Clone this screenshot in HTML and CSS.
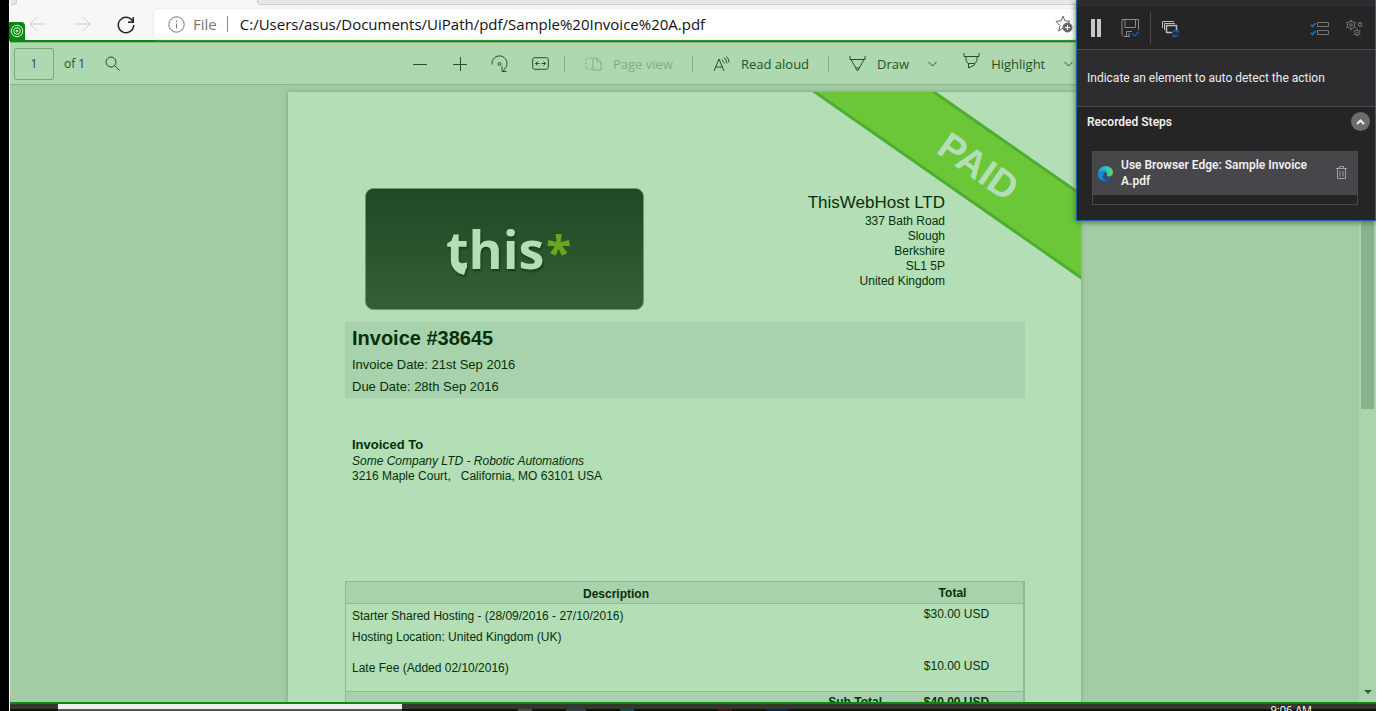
FILE: index.html
```html
<!DOCTYPE html>
<html lang="en">
<head>
<meta charset="utf-8">
<title>Sample Invoice A.pdf</title>
<link rel="stylesheet" href="styles.css">
</head>
<body>
<div class="screen">
  <header class="address-bar">
    <div class="tab-strip"></div>
    <div class="tab-edge"></div>
    <nav class="nav">
      <button class="icon-btn faint" aria-label="Back"><svg width="18" height="16" viewBox="0 0 18 16"><path d="M17 7H1M8 0 1 7l7 7"/></svg></button>
      <button class="icon-btn faint" aria-label="Forward"><svg width="18" height="16" viewBox="0 0 18 16"><path d="M1 7h16M10 0l7 7-7 7"/></svg></button>
      <button class="icon-btn strong" aria-label="Refresh"><svg width="18" height="18" viewBox="0 0 18 18"><path d="M16.200 6.300A7.700 7.700 0 1 0 16.700 9M16.300 1v5.300H11"/></svg></button>
    </nav>
    <div class="omnibox">
      <svg class="info" width="17" height="17" viewBox="0 0 17 17"><circle cx="8.500" cy="8.500" r="7.700"/><path d="M8.500 7.500v5M8.500 4.500v1.500"/></svg>
      <span class="scheme">File</span>
      <span class="scheme-line"></span>
      <input class="url" aria-label="Address" value="C:/Users/asus/Documents/UiPath/pdf/Sample%20Invoice%20A.pdf">
      <button class="icon-btn star" aria-label="Add to favorites"><svg width="18" height="18" viewBox="0 0 18 18"><path d="M8 1.200l1.900 4.600 5.100.4-3.500 3.400M8 13l-4.400 3 1.500-5.300L1 6.400l5.100-.6L8 1.200"/><circle cx="12.500" cy="12.500" r="4.500" class="solid"/><path class="light" d="M12.500 10v5M10 12.500h5"/></svg></button>
    </div>
  </header>

  <main class="capture">
    <div class="pdf-toolbar">
      <div class="pager">
        <input class="page-no" id="page-no" value="1" aria-label="Page number">
        <label for="page-no">of 1</label>
        <button class="icon-btn" aria-label="Find"><svg width="15" height="15" viewBox="0 0 15 15"><circle cx="6" cy="6" r="5"/><path d="M9.500 9.500l5 5"/></svg></button>
      </div>
      <div class="tools">
        <button class="icon-btn" aria-label="Zoom out"><svg width="14" height="14" viewBox="0 0 14 14"><path d="M0 7.500h14"/></svg></button>
        <button class="icon-btn" aria-label="Zoom in"><svg width="14" height="14" viewBox="0 0 14 14"><path d="M0 7.500h14M7.500 0v14"/></svg></button>
        <button class="icon-btn" aria-label="Rotate"><svg width="18" height="18" viewBox="0 0 18 18"><path d="M1 9.500V8.500a7.500 7.500 0 1 1 12.500 5.500l-1 2M11 11.500v5h4.500"/><circle cx="8.500" cy="9" r="1.500"/></svg></button>
        <button class="icon-btn" aria-label="Fit to width"><svg width="17" height="13" viewBox="0 0 17 13"><rect x=".7" y=".7" width="15.600" height="11.600" rx="2"/><path d="M3.500 6.500h4M9.500 6.500h4M5.500 4.500l-2 2 2 2M11.500 4.500l2 2-2 2"/></svg></button>
        <span class="divider"></span>
        <button class="tool faded" disabled><svg width="17" height="14" viewBox="0 0 17 14"><path stroke-dasharray="2 1.500" d="M7 1H1v11h6"/><path d="M8 1h4l4 4v8H8zM12 1v4h4"/></svg><span>Page view</span></button>
        <span class="divider"></span>
        <button class="tool"><svg width="17" height="16" viewBox="0 0 17 16"><path d="M1 15 6 3l5 12M2.500 11h7M9 3.500l2.500 4M11 1.500q2.500 2 3 6M13.500.5Q16 3 16 6.500"/></svg><span>Read aloud</span></button>
        <span class="divider"></span>
        <button class="tool"><svg width="17" height="16" viewBox="0 0 17 16"><path d="M1 0v3.500h15V0M2 3.500 8.500 15 15 3.500M6.500 12h4"/></svg><span>Draw</span></button>
        <button class="icon-btn chevron" aria-label="Draw options"><svg width="9" height="6" viewBox="0 0 9 6"><path d="M.5 1l4 4 4-4"/></svg></button>
        <button class="tool"><svg class="raised" width="17" height="16" viewBox="0 0 17 16"><path d="M1 0v3.500h15V0M3 3.500v4l2 3h7l2-3v-4M5.500 10.500V15l6-3v-1.500"/></svg><span>Highlight</span></button>
        <button class="icon-btn chevron" aria-label="Highlight options"><svg width="9" height="6" viewBox="0 0 9 6"><path d="M.5 1l4 4 4-4"/></svg></button>
      </div>
    </div>

    <div class="viewer">
      <div class="canvas">
        <article class="page">
          <svg class="ribbon" width="270" height="190" viewBox="0 0 270 190">
            <path class="band" d="M2-1h120l150 104v84z"/>
            <path class="band-edge" d="M1-2 272 187M120-2 272 104"/>
            <text transform="translate(124 60) rotate(35)">PAID</text>
          </svg>
          <div class="letterhead">
            <svg class="logo" width="280" height="123" viewBox="0 0 280 123" role="img" aria-label="this*">
              <defs><linearGradient id="panel" x2="0" y2="1"><stop offset="0" stop-color="#1f4922"/><stop offset="1" stop-color="#345f37"/></linearGradient></defs>
              <rect x=".5" y=".5" width="278" height="121" rx="8" fill="url(#panel)" stroke="#6b986e"/>
              <g class="logo-word"><text x="81" y="81">this</text><path d="M86.500 71q-.5 13 12.500 16l2-6q-6.500-1-6.500-7z"/></g>
              <text class="logo-star" x="181" y="82">*</text>
            </svg>
            <address class="company">
              <strong>ThisWebHost LTD</strong>
              337 Bath Road<br>Slough<br>Berkshire<br>SL1 5P<br>United Kingdom
            </address>
          </div>
          <section class="summary">
            <h1>Invoice #38645</h1>
            <p>Invoice Date: 21st Sep 2016</p>
            <p>Due Date: 28th Sep 2016</p>
          </section>
          <section class="client">
            <h2>Invoiced To</h2>
            <p><em>Some Company LTD - Robotic Automations</em></p>
            <p>3216 Maple Court, &nbsp; California, MO 63101 USA</p>
          </section>
          <table class="items">
            <thead><tr><th>Description</th><th class="amount">Total</th></tr></thead>
            <tbody>
              <tr class="hosting"><td>Starter Shared Hosting - (28/09/2016 - 27/10/2016)<br>Hosting Location: United Kingdom (UK)</td><td class="amount">$30.00 USD</td></tr>
              <tr class="fee"><td>Late Fee (Added 02/10/2016)</td><td class="amount">$10.00 USD</td></tr>
            </tbody>
            <tfoot><tr><th>Sub Total</th><td class="amount">$40.00 USD</td></tr></tfoot>
          </table>
        </article>
      </div>
      <div class="scrollbar">
        <div class="thumb"></div>
        <svg width="8" height="4" viewBox="0 0 8 4"><path d="M0 0h8L4 4z"/></svg>
      </div>
    </div>
  </main>

  <footer class="taskbar">
    <span class="search-field"></span>
    <span class="apps"><i class="app grey"></i><i class="app slate"></i><i class="app teal"></i><i class="app red"></i><i class="app blue"></i></span>
    <time>9:06 AM</time>
  </footer>

  <div class="target"><svg width="14" height="14" viewBox="0 0 14 14"><circle cx="7" cy="7" r="5.700"/><circle cx="7" cy="7" r="3.300"/><circle cx="7" cy="7" r="1"/></svg></div>

  <aside class="recorder">
    <div class="rec-tools">
      <button class="icon-btn" aria-label="Pause"><svg width="10" height="18" viewBox="0 0 10 18"><path class="bars" d="M0 0h4v18H0zM6 0h4v18H6z"/></svg></button>
      <button class="icon-btn save" aria-label="Save"><svg width="19" height="19" viewBox="0 0 19 19"><path d="M9 17.500H3l-2-2V.5h16.500V11M4 .5v8h10.500v-8M5.500 17.500v-5H11M8 14v3.500"/><path class="accent" d="M11 14.500l2.500 2.500 4.500-4.500"/></svg></button>
      <span class="rec-line"></span>
      <button class="icon-btn windows" aria-label="Refresh windows"><svg width="18" height="17" viewBox="0 0 18 17"><path d="M.5 8V1.500H12M2.500 10V3.500H13"/><path d="M10 12.500H4.500v-7h10V10" stroke-width="1.500"/><path class="accent" d="M11 13a2.700 2.700 0 0 1 4.700-1.500M16.300 14a2.700 2.700 0 0 1-4.700 1.500M16 9.500v2.300h-2.300M11.300 17.500v-2.300h2.300"/></svg></button>
      <span class="spring"></span>
      <button class="icon-btn" aria-label="Step list"><svg width="19" height="15" viewBox="0 0 19 15"><path d="M7.500 1.500h11v4h-11zM7.500 9.500h11v4h-11z"/><path class="tick" d="M1 4l1.500 1.500L5.500 2M1 12l1.500 1.500L5.500 10"/></svg></button>
      <button class="icon-btn" aria-label="Settings"><svg width="18" height="18" viewBox="0 0 18 18"><circle cx="6" cy="6" r="3.700"/><circle cx="6" cy="6" r="1.300"/><path d="M6 .3v2M6 9.700v2M1 3.200l1.700 1M9.300 7.800l1.700 1M1 8.800l1.700-1M9.300 4.200l1.700-1"/><circle cx="12" cy="13.500" r="2.600"/><circle cx="12" cy="13.500" r=".6"/><path d="M12 9.500V11M12 16v1.500M8.500 11.500l1.300.8M14.200 14.700l1.300.8M8.500 15.500l1.300-.8M14.200 12.300l1.300-.8"/><circle cx="15" cy="5.500" r="1.500"/><path d="M15 2.700V4M15 7v1.300M12.500 4l1.200.8M16.300 6.200l1.200.8M12.500 7l1.200-.8M16.300 4.800l1.200-.8"/></svg></button>
    </div>
    <p class="hint">Indicate an element to auto detect the action</p>
    <section class="steps">
      <div class="steps-head">
        <h2>Recorded Steps</h2>
        <button class="collapse" aria-label="Collapse"><svg width="9" height="6" viewBox="0 0 9 6"><path d="M1 5l3.500-3.500L8 5"/></svg></button>
      </div>
      <div class="step-list">
        <div class="step">
          <svg class="edge-logo" width="15" height="15" viewBox="0 0 15 15">
            <defs><linearGradient id="swirl"><stop offset="0" stop-color="#169bdc"/><stop offset=".55" stop-color="#2fc6c4"/><stop offset="1" stop-color="#62d750"/></linearGradient></defs>
            <path fill="url(#swirl)" d="M0 7C.5 3 3.500 0 7.500 0 12 0 15 3 15 6.500c0 2.500-2 4-4.200 4-1.700 0-2.500-.8-1.800-2C9.500 6 7.500 5 5.500 5 3 5 1 6 0 7z"/>
            <path fill="#1788dd" d="M0 7.500C1 5.500 3.500 4.300 6 4.500c1.800.2 3 1.200 3.200 2.500C7.500 6 5.500 7 5.300 9c-.2 2.300 1.500 5 4.700 5.500C4.500 16.500-.5 12.500 0 7.500z"/>
            <path fill="#125aa8" d="M5.500 8.500C5 12 9 13.300 13.500 11.500c-1.500 2.700-4 3.700-6.300 3C4.500 13.500 4 10.500 5.500 8.500z"/>
          </svg>
          <span class="step-name">Use Browser Edge: Sample Invoice A.pdf</span>
          <button class="icon-btn" aria-label="Delete step"><svg width="11" height="14" viewBox="0 0 11 14"><path d="M0 2.500h11M3.500 2.500v-2h4v2M1.500 2.500v10h8v-10M4 5v5.500M7 5v5.500"/></svg></button>
        </div>
      </div>
    </section>
  </aside>
</div>
</body>
</html>
```
FILE: styles.css
```css
* { box-sizing: border-box; }

body {
  margin: 0;
  height: 100vh;
  padding-right: 10px;
  overflow: hidden;
  background: #fff;
  font-family: "Open Sans", "Noto Sans", sans-serif;
}

h1, h2, p { margin: 0; }

button {
  font: inherit;
  color: inherit;
  background: none;
  border: 0;
  padding: 0;
}

svg {
  display: block;
  flex: none;
  fill: none;
  stroke: currentColor;
  overflow: visible;
}

.icon-btn { display: flex; align-items: center; }

.screen {
  position: relative;
  height: 100%;
  display: flex;
  flex-direction: column;
  border-left: 9px solid #000;
  padding-left: 1px;
  overflow: hidden;
}

/* Address bar */
.address-bar {
  position: relative;
  flex: none;
  height: 40px;
  padding-top: 9px;
  display: flex;
  background: #f7f7f7;
}

.tab-strip {
  position: absolute;
  top: 0;
  left: 247px;
  right: 0;
  height: 5px;
  background: #e7e7e7;
  border: solid #ccc;
  border-width: 0 0 1px 1px;
  border-radius: 0 0 0 4px;
}

.tab-edge {
  position: absolute;
  top: 0;
  left: 1px;
  width: 6px;
  height: 5px;
  background: #e7e7e7;
  border: solid #ccc;
  border-width: 0 1px 1px 0;
  border-radius: 0 0 4px 0;
}

.nav {
  display: flex;
  align-items: center;
  gap: 26px;
  padding-left: 19px;
  width: 144px;
}

.faint { color: #cbcbcb; }
.strong { color: #222; }
.strong svg { stroke-width: 1.500; }

.omnibox {
  flex: 1;
  display: flex;
  align-items: center;
  height: 30px;
  padding-left: 14px;
  background: #fff;
  border-radius: 4px 0 0 4px;
  box-shadow: 0 0 3px #ddd;
}

.info { color: #767676; }
.scheme { margin-left: 8px; font-size: 15px; color: #767676; }
.scheme-line { width: 1px; height: 16px; margin: 0 12px 0 10px; background: #8a8a8a; }

.url {
  flex: 1;
  min-width: 0;
  border: 0;
  padding: 0;
  background: none;
  font: 15px "Open Sans", sans-serif;
  color: #111;
}

.star { margin-right: 303px; color: #666; }
.solid { fill: #666; }
.light { stroke: #fff; }

/* Highlighted capture area */
.capture {
  flex: 1;
  min-height: 0;
  display: flex;
  flex-direction: column;
  border: solid #078a0f;
  border-width: 2px 0;
  background: #a3cca4;
}

.target {
  position: absolute;
  top: 22px;
  left: 0;
  width: 16px;
  height: 19px;
  padding: 2px 1px;
  border-radius: 0 4px 0 0;
  background: #078a0f;
  color: #d8f4d8;
}

.pdf-toolbar {
  flex: none;
  height: 43px;
  display: flex;
  align-items: center;
  padding-left: 4px;
  background: #aed8af;
  border: solid #8bb58e;
  border-width: 1px 0;
  color: #235427;
  font-size: 13px;
}

.pager { display: flex; align-items: center; width: 386px; }
.pager label { margin: 0 20px 0 10px; font-size: 12px; }

.page-no {
  width: 40px;
  height: 32px;
  padding: 0;
  border: 1px solid #7eaa81;
  border-radius: 2px;
  background: none;
  text-align: center;
  font: 12px "Open Sans", sans-serif;
  color: inherit;
}

.tools { display: flex; align-items: center; }
.tools > .icon-btn { width: 40px; justify-content: center; }
.tools > .chevron { width: 27px; margin: 0 17px 0 10px; }
.divider { width: 1px; height: 16px; margin: 0 20px 0 4px; background: #7eaa81; }
.tool { display: flex; align-items: center; gap: 11px; }
.tool + .divider { margin-left: 19px; }
.faded { color: #83ad85; }
.raised { margin-bottom: 6px; }

/* PDF page */
.viewer { flex: 1; min-height: 0; display: flex; }
.canvas { flex: 1; padding-top: 7px; overflow: hidden; }

.page {
  position: relative;
  width: 793px;
  height: 1123px;
  margin: 0 auto;
  padding: 96px 56px 0 57px;
  background: #b4deb5;
  box-shadow: 0 0 4px #749f78;
  color: #06300c;
  font: 12px/15px "Liberation Sans", Arial, sans-serif;
}

.ribbon { position: absolute; top: 0; right: 0; overflow: hidden; }
.band { fill: #6bc738; stroke: none; }
.band-edge { stroke: #4dae32; stroke-width: 3; }
.ribbon text {
  fill: #b4deb5;
  stroke: none;
  font: bold 38px "Liberation Sans", Arial, sans-serif;
}

.letterhead {
  display: flex;
  justify-content: space-between;
  padding: 0 80px 0 20px;
  margin-bottom: 11px;
}

.logo text, .logo path { stroke: none; }
.logo-word {
  fill: #b4deb5;
  font: 700 52px "Open Sans", sans-serif;
  filter: drop-shadow(1px 2px 1px #173c1b);
}
.logo-star { fill: #68a81f; font: 700 46px "Open Sans", sans-serif; }

.company { padding-top: 4px; text-align: right; font-style: normal; }
.company strong { display: block; font-size: 17px; font-weight: normal; line-height: 22px; }

.summary { padding: 4px 7px 0; background: #a8d2ab; font-size: 13px; line-height: 22px; }
.summary h1 { margin-bottom: 4px; font-size: 20px; line-height: 24px; }

.client { padding: 38px 7px 0; }
.client h2 { font-size: 13px; line-height: 18px; }

.items {
  width: 100%;
  margin-top: 97px;
  border: 1px solid #8fba94;
  border-right-width: 2px;
  border-spacing: 0;
  table-layout: fixed;
}
.items th, .items td { padding: 0 6px; vertical-align: top; text-align: left; line-height: 21px; }
.items thead th {
  height: 22px;
  padding-top: 2px;
  text-align: center;
  line-height: 19px;
  background: #a8d2ab;
  border-bottom: 1px solid #8fba94;
}
.items thead th:first-child { padding-top: 4px; line-height: 17px; }
.items .amount { width: 137px; padding: 0 0 0 4px; text-align: center; }
.items thead .amount { padding: 2px 4px 0 0; line-height: 19px; }
.hosting td { height: 47px; padding-top: 2px; }
.hosting .amount { padding-top: 0; }
.items .fee td { height: 40px; padding-top: 7px; }
.items .fee .amount { padding-top: 5px; }
.items tfoot th, .items tfoot td {
  background: #a8d2ab;
  border-top: 1px solid #8fba94;
  font-weight: bold;
}
.items tfoot th { padding-right: 4px; text-align: right; }

.scrollbar {
  width: 17px;
  display: flex;
  flex-direction: column;
  align-items: center;
  justify-content: space-between;
  padding-bottom: 8px;
  background: #aad4ac;
}
.thumb { width: 13px; height: 324px; background: #89b18b; }
.scrollbar svg { fill: #2c6131; stroke: none; }

/* Taskbar, cut off by the bottom of the window */
.taskbar {
  flex: none;
  height: 7px;
  display: flex;
  align-items: flex-start;
  overflow: hidden;
  padding-left: 48px;
  background: linear-gradient(#34372b 5px, #100f0c 5px);
}
.search-field { width: 344px; height: 7px; background: linear-gradient(#efefef 5px, #555 5px); }
.apps { flex: 1; display: flex; gap: 34px; padding: 5px 0 0 116px; }
.app { width: 14px; height: 2px; }
.grey { background: #4a4a48; }
.slate { width: 20px; background: #343a48; }
.teal { background: #12474e; }
.red { margin-left: 50px; background: #4c1218; }
.blue { width: 22px; background: #0b1f4c; }
.taskbar time { padding-right: 64px; font-size: 11px; line-height: 11px; color: #fff; }

/* Recorder panel */
.recorder {
  position: absolute;
  top: 0;
  right: 0;
  width: 300px;
  padding-top: 7px;
  background: #2d2d30;
  border: solid #1c63a8;
  border-width: 0 1px 1px;
  box-shadow: 0 1px 6px #3e6b42;
  color: #eee;
  font: 12px Roboto, "Open Sans", sans-serif;
}

.rec-tools {
  height: 43px;
  display: flex;
  align-items: center;
  padding: 0 12px 0 14px;
  background: #252526;
  border-bottom: 1px solid #4a4a4d;
  color: #8a8a8a;
}
.bars { fill: #c8c8c8; stroke: none; }
.accent { stroke: #145ca8; stroke-width: 1.500; }
.tick { stroke: #1e7ad0; stroke-width: 1.500; }
.save { margin-left: 20px; }
.rec-line { width: 1px; height: 32px; margin: 0 11px 0 10px; background: #4a4a4d; }
.windows { color: #bbb; }
.spring { flex: 1; }
.spring ~ .icon-btn { margin-left: 16px; color: #777; }

.hint { padding: 0 10px; line-height: 56px; border-bottom: 1px solid #4a4a4d; }

.steps { padding: 5px 5px 15px 10px; background: #252526; }
.steps-head { display: flex; align-items: center; justify-content: space-between; }
.steps h2 { font-size: 12px; font-weight: 600; }

.collapse {
  width: 19px;
  height: 19px;
  display: grid;
  place-items: center;
  border-radius: 50%;
  background: #6c6c6c;
}
.collapse svg { stroke-width: 2; }

.step-list {
  margin: 20px 12px 0 5px;
  padding-bottom: 9px;
  border: 1px solid #4a4a4d;
}
.step {
  display: flex;
  align-items: center;
  gap: 8px;
  min-height: 43px;
  padding: 0 10px 0 5px;
  background: #46464b;
  border-bottom: 1px solid #4a4a4d;
  color: #a0a0a0;
}
.edge-logo { stroke: none; }
.step-name { flex: 1; font-weight: 600; line-height: 16px; color: #f0f0f0; }
```
